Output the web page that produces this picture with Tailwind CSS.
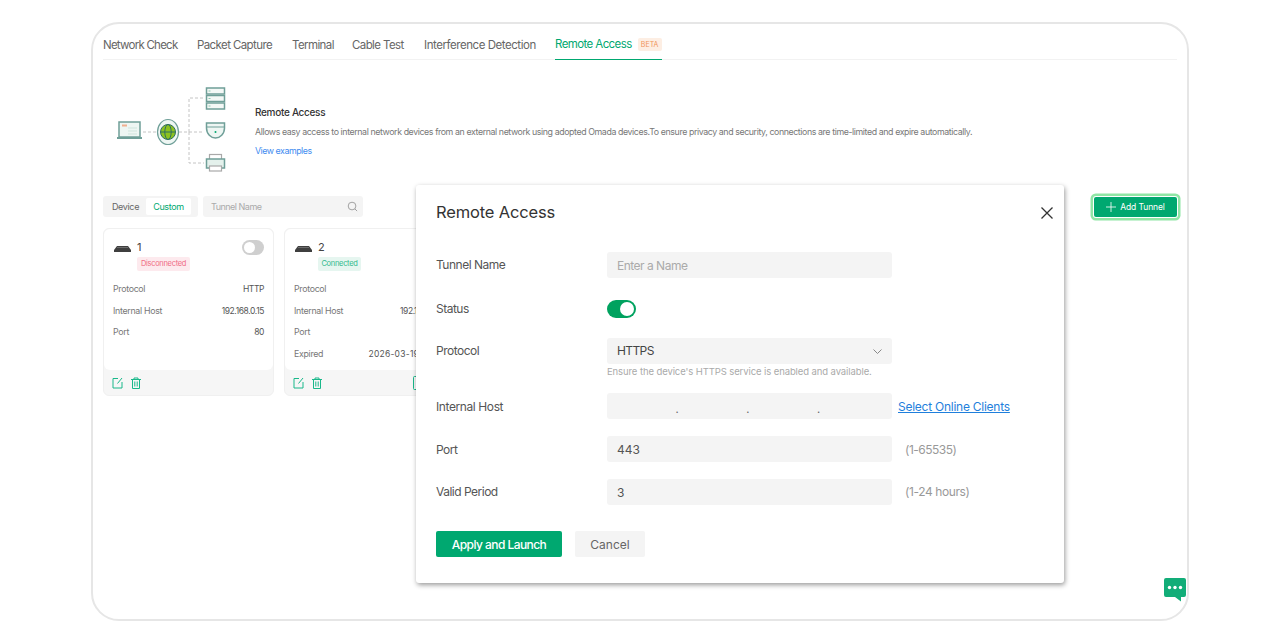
<!DOCTYPE html>
<html lang="en">

<head>
    <meta charset="UTF-8">
    <title>Remote Access</title>
    <script src="https://cdn.jsdelivr.net/npm/@tailwindcss/browser@4"></script>
</head>

<body class="bg-white font-['Inter',sans-serif] overflow-hidden">
    <div class="relative w-[1280px] h-[643px] pt-[22px] pl-[91px]">
        <!-- frame -->
        <div class="relative w-[1098px] h-[599px] border-2 border-[#e6e6e6] rounded-[28px] px-[10px] pt-[6px]">

            <!-- tabs -->
            <div class="flex h-[30px] border-b border-[#f2f2f2] text-[11.5px] tracking-[-0.6px] text-[#666666] whitespace-nowrap">
                <a class="w-[94px] leading-[31px] tracking-[-0.75px]">Network Check</a>
                <a class="w-[95px] leading-[31px]">Packet Capture</a>
                <a class="w-[60px] leading-[31px]">Terminal</a>
                <a class="w-[72px] leading-[31px]">Cable Test</a>
                <a class="w-[131px] leading-[31px] tracking-[-0.45px]">Interference Detection</a>
                <a class="flex items-center h-[30px] w-[107px] border-b border-[#00a870] text-[#00a870] leading-[31px]">Remote Access
                    <span class="ml-[6px] w-[24px] h-[13px] leading-[13px] text-center bg-[#fdeee3] text-[#f0945a] text-[7px] rounded-[2px] tracking-normal">BETA</span>
                </a>
            </div>

            <!-- intro -->
            <div class="flex mt-[25px] h-[92px]">
                <svg class="ml-[13px] w-[112px] h-[92px]" viewBox="0 0 112 92" fill="none">
                    <path d="M27 47H41M63 47H88M73 47V13H88M73 47V78H88" stroke="#c4c4c4" stroke-dasharray="3 2" />
                    <rect x="3" y="37" width="21" height="15" fill="#eef6f3" stroke="#6f9f98" stroke-width="1.5" />
                    <rect x="6" y="39.5" width="5" height="2" fill="#f0b090" />
                    <path d="M12 43H21M12 46H21M12 49H21" stroke="#cfe5dd" />
                    <rect x="1" y="52" width="25" height="2" fill="#6f9f98" />
                    <ellipse cx="52" cy="47" rx="10.5" ry="12.5" fill="#eef6f3" stroke="#6f9f98" stroke-width="1.2" />
                    <circle cx="52" cy="47" r="7.5" fill="#8cc21f" stroke="#2f6f62" />
                    <ellipse cx="52" cy="47" rx="3.2" ry="7.5" stroke="#2f6f62" />
                    <path d="M44.5 47H59.5" stroke="#2f6f62" />
                    <g fill="#f4f8f6" stroke="#6f9f98" stroke-width="1.5">
                        <rect x="90.5" y="3" width="18" height="6" />
                        <rect x="90.5" y="10.5" width="18" height="6" />
                        <rect x="90.5" y="18" width="18" height="6" />
                    </g>
                    <path d="M92.5 6H94.5M92.5 13.5H94.5M92.5 21H94.5" stroke="#8cc9b0" />
                    <path d="M90.5 38H108.5V43C108.5 49 104 53 99.5 53C95 53 90.5 49 90.5 43Z" fill="#eef6f3" stroke="#6f9f98" stroke-width="1.5" />
                    <path d="M90.5 42H108.5" stroke="#6f9f98" />
                    <circle cx="99.5" cy="47" r="1" fill="#00a870" />
                    <rect x="93.5" y="69.5" width="12" height="6" fill="#fff" stroke="#a9a9a9" stroke-width="1.2" />
                    <rect x="90.5" y="74" width="18" height="9" fill="#e4f1ec" stroke="#6f9f98" stroke-width="1.5" />
                    <rect x="93.5" y="81" width="12" height="5" fill="#fff" stroke="#a9a9a9" stroke-width="1.2" />
                </svg>
                <div class="ml-[27px] pt-[20px]">
                    <h2 class="text-[10px] leading-[15px] text-[#333333] font-medium tracking-[-0.3px]">Remote Access</h2>
                    <p class="mt-[5px] text-[8.8px] leading-[14px] text-[#777777] tracking-[-0.4px] whitespace-nowrap">Allows easy access to internal network devices from an external network using adopted Omada devices.To ensure privacy and security, connections are time-limited and expire automatically.</p>
                    <a class="block mt-[5px] text-[8.8px] leading-[14px] text-[#3f8cf0] tracking-[-0.45px]">View examples</a>
                </div>
            </div>

            <!-- filter bar -->
            <div class="flex items-start h-[27px] mt-[17px] pt-[2px]">
                <div class="flex items-center w-[95px] h-[21px] bg-[#f4f4f4] rounded-[3px] p-[2px] text-[9px] tracking-[-0.35px]">
                    <span class="w-[41px] text-center text-[#666666]">Device</span>
                    <span class="w-[45px] h-[17px] leading-[17px] text-center bg-white text-[#00a870] rounded-[2px]">Custom</span>
                </div>
                <div class="flex items-center justify-between w-[160px] h-[21px] ml-[5px] pl-[8px] pr-[5px] bg-[#f4f4f4] rounded-[3px] text-[9px] tracking-[-0.5px] text-[#aaaaaa]">
                    Tunnel Name
                    <svg class="w-[11px] h-[11px]" viewBox="0 0 12 12" fill="none" stroke="#999999"><circle cx="5.5" cy="5.5" r="4.2" /><path d="M8.6 8.6L11 11" /></svg>
                </div>
                <button class="flex items-center justify-center gap-[4px] w-[83px] h-[20px] mt-[1px] ml-auto bg-[#00a870] text-white text-[8.5px] tracking-[-0.1px] rounded-[2px] ring-1 ring-white shadow-[0_0_0_3.5px_#8fe6a5]">
                    <svg class="w-[10px] h-[10px]" viewBox="0 0 10 10" stroke="#ffffff" stroke-width="0.8"><path d="M5 0V10M0 5H10" /></svg>
                    Add Tunnel
                </button>
            </div>

            <!-- tunnel cards -->
            <div class="flex gap-[10px] mt-[7px]">
                <div class="w-[171px] h-[168px] flex flex-col rounded-[6px] border border-[#f0f0f0] bg-[#f6f6f6] shrink-0">
                    <div class="h-[141px] bg-white rounded-[6px] px-[9px] pt-[10px] text-[8.8px] tracking-[-0.3px]">
                        <div class="flex items-center h-[16px] pl-[1px]">
                            <svg class="w-[17px] h-[6px] mt-[3px]" viewBox="0 0 17 6"><path d="M3 0H14L17 4V6H0V4Z" fill="#3f3f3f" /><path d="M3 1.5H14" stroke="#777777" stroke-width="0.8" /></svg>
                            <span class="ml-[6px] text-[11px] text-[#444444]">1</span>
                            <span class="ml-auto w-[22px] h-[15px] rounded-full bg-[#cfcfcf] p-[2px]"><span class="block w-[11px] h-[11px] rounded-full bg-white"></span></span>
                        </div>
                        <span class="block ml-[24px] w-[53px] h-[14px] leading-[14px] mt-[2px] text-center text-[7.5px] bg-[#fdeaee] text-[#f06a84] rounded-[2px] tracking-[-0.3px]">Disconnected</span>
                        <div class="flex justify-between mt-[11px] leading-[14px] text-[#777777]"><span>Protocol</span><span class="text-[#555555] text-[8.5px] tracking-[-0.4px]">HTTP</span></div>
                        <div class="flex justify-between mt-[7.7px] leading-[14px] text-[#777777]"><span>Internal Host</span><span class="text-[#555555] text-[8.5px] tracking-[-0.4px]">192.168.0.15</span></div>
                        <div class="flex justify-between mt-[7.7px] leading-[14px] text-[#777777]"><span>Port</span><span class="text-[#555555] text-[8.5px] tracking-[-0.4px]">80</span></div>
                    </div>
                    <div class="flex items-center gap-[8px] flex-1 pl-[8px]">
                        <svg class="w-[11px] h-[12px]" viewBox="0 0 11 12" fill="none" stroke="#19b88a"><path d="M6 1.5H1V11H10V5M10 1L5.5 6.5" /></svg>
                        <svg class="w-[10px] h-[12px]" viewBox="0 0 10 12" fill="none" stroke="#19b88a"><path d="M0 2.5H10M3 2.5V1H7V2.5M1.5 2.5V11.5H8.5V2.5M3.8 4.5V9.5M6.2 4.5V9.5" /></svg>
                    </div>
                </div>
                <div class="w-[171px] h-[168px] flex flex-col rounded-[6px] border border-[#f0f0f0] bg-[#f6f6f6] shrink-0">
                    <div class="h-[141px] bg-white rounded-[6px] px-[9px] pt-[10px] text-[8.8px] tracking-[-0.3px]">
                        <div class="flex items-center h-[16px] pl-[1px]">
                            <svg class="w-[17px] h-[6px] mt-[3px]" viewBox="0 0 17 6"><path d="M3 0H14L17 4V6H0V4Z" fill="#3f3f3f" /><path d="M3 1.5H14" stroke="#777777" stroke-width="0.8" /></svg>
                            <span class="ml-[6px] text-[11px] text-[#444444]">2</span>
                        </div>
                        <span class="block ml-[24px] w-[43px] h-[14px] leading-[14px] mt-[2px] text-center text-[7.5px] bg-[#e6f6f0] text-[#2fb98c] rounded-[2px] tracking-[-0.3px]">Connected</span>
                        <div class="flex justify-between mt-[11px] leading-[14px] text-[#777777]"><span>Protocol</span><span class="text-[#555555] text-[8.5px] tracking-[-0.4px]">HTTPS</span></div>
                        <div class="flex justify-between mt-[7.7px] leading-[14px] text-[#777777]"><span>Internal Host</span><span class="text-[#555555] text-[8.5px] tracking-[-0.4px]">192.168.0.20</span></div>
                        <div class="flex justify-between mt-[7.7px] leading-[14px] text-[#777777]"><span>Port</span><span class="text-[#555555] text-[8.5px] tracking-[-0.4px]">443</span></div>
                        <div class="flex justify-between mt-[7.7px] leading-[14px] text-[#777777]"><span>Expired</span><span class="text-[#555555] text-[8.5px] tracking-[0.25px] whitespace-nowrap">2026-03-19 10:00</span></div>
                    </div>
                    <div class="flex items-center gap-[8px] flex-1 pl-[8px]">
                        <svg class="w-[11px] h-[12px]" viewBox="0 0 11 12" fill="none" stroke="#19b88a"><path d="M6 1.5H1V11H10V5M10 1L5.5 6.5" /></svg>
                        <svg class="w-[10px] h-[12px]" viewBox="0 0 10 12" fill="none" stroke="#19b88a"><path d="M0 2.5H10M3 2.5V1H7V2.5M1.5 2.5V11.5H8.5V2.5M3.8 4.5V9.5M6.2 4.5V9.5" /></svg>
                        <svg class="ml-[83px] w-[11px] h-[14px]" viewBox="0 0 11 14" fill="none" stroke="#19b88a"><rect x="0.5" y="0.5" width="10" height="13" rx="1" /></svg>
                    </div>
                </div>
            </div>

            <!-- feedback bubble -->
            <svg class="absolute right-[1px] bottom-[17px] w-[22px] h-[24px]" viewBox="0 0 22 24">
                <path d="M2 0H20A2 2 0 0 1 22 2V17A2 2 0 0 1 20 19H17V23.5L11 19H2A2 2 0 0 1 0 17V2A2 2 0 0 1 2 0Z" fill="#12ad78" />
                <circle cx="5.5" cy="9.5" r="1.7" fill="#fff" /><circle cx="11" cy="9.5" r="1.7" fill="#fff" /><circle cx="16.5" cy="9.5" r="1.7" fill="#fff" />
            </svg>
        </div>

        <!-- modal -->
        <div class="absolute left-[416px] top-[185px] w-[648px] h-[398px] bg-white rounded-[3px] shadow-[1px_2px_5px_rgba(0,0,0,0.4)] pl-[20px] text-[12px] text-[#555555]">
            <div class="flex items-center justify-between h-[54px] pt-[1px] pr-[11px]">
                <h1 class="text-[16.5px] font-normal text-[#333333] tracking-[-0.15px]">Remote Access</h1>
                <svg class="w-[12px] h-[12px]" viewBox="0 0 12 12" stroke="#333333" stroke-width="1.3"><path d="M0.5 0.5L11.5 11.5M11.5 0.5L0.5 11.5" /></svg>
            </div>
            <div class="flex items-center h-[26px] mt-[13px]">
                <label class="w-[171px] tracking-[-0.5px]">Tunnel Name</label>
                <div class="w-[285px] h-[26px] leading-[28px] bg-[#f4f4f4] rounded-[3px] px-[10px] text-[#aaaaaa] tracking-[-0.5px]">Enter a Name</div>
            </div>
            <div class="flex items-center h-[18px] mt-[22px]">
                <label class="w-[171px] tracking-[-0.5px]">Status</label>
                <span class="flex justify-end items-center w-[29px] h-[18px] bg-[#00a25f] rounded-full pr-[2px]"><span class="block w-[14px] h-[14px] rounded-full bg-white"></span></span>
            </div>
            <div class="flex items-center h-[26px] mt-[20px]">
                <label class="w-[171px] tracking-[-0.5px]">Protocol</label>
                <div class="flex items-center justify-between w-[285px] h-[26px] bg-[#f4f4f4] rounded-[3px] pl-[10px] pr-[10px] text-[#444444] tracking-[-0.6px]">
                    HTTPS
                    <svg class="w-[9px] h-[5px]" viewBox="0 0 9 5" fill="none" stroke="#888888"><path d="M0.5 0.5L4.5 4.5L8.5 0.5" /></svg>
                </div>
            </div>
            <p class="ml-[171px] mt-[1px] text-[9.5px] leading-[14px] text-[#aaaaaa] tracking-[-0.1px]">Ensure the device's HTTPS service is enabled and available.</p>
            <div class="flex items-center h-[26px] mt-[14px]">
                <label class="w-[171px] tracking-[-0.4px] pt-[1px]">Internal Host</label>
                <div class="grid grid-cols-4 w-[285px] h-[26px] bg-[#f4f4f4] rounded-[3px] px-[1px] leading-[32px] text-[#666666] text-[11px]">
                    <span class="text-right">.</span><span class="text-right">.</span><span class="text-right">.</span><span></span>
                </div>
                <a class="ml-[6px] mt-[2px] text-[#1f7fdc] underline tracking-[-0.25px]">Select Online Clients</a>
            </div>
            <div class="flex items-center h-[26px] mt-[17px]">
                <label class="w-[171px] tracking-[-0.5px] pt-[1px]">Port</label>
                <div class="w-[285px] h-[26px] leading-[27px] bg-[#f4f4f4] rounded-[3px] px-[10px] text-[#555555]">443</div>
                <span class="ml-[13px] pt-[1px] text-[#999999] tracking-[-0.5px]">(1-65535)</span>
            </div>
            <div class="flex items-center h-[26px] mt-[17px]">
                <label class="w-[171px] tracking-[-0.5px]">Valid Period</label>
                <div class="w-[285px] h-[26px] leading-[28px] bg-[#f4f4f4] rounded-[3px] px-[10px] text-[#555555]">3</div>
                <span class="ml-[13px] text-[#999999] tracking-[-0.4px]">(1-24 hours)</span>
            </div>
            <div class="flex gap-[13px] mt-[26px]">
                <button class="w-[126px] h-[26px] bg-[#00a870] text-white font-medium rounded-[2px] tracking-[-0.55px] pt-[1px]">Apply and Launch</button>
                <button class="w-[70px] h-[26px] bg-[#f4f4f4] text-[#666666] rounded-[2px] pt-[1px]">Cancel</button>
            </div>
        </div>
    </div>
</body>

</html>
